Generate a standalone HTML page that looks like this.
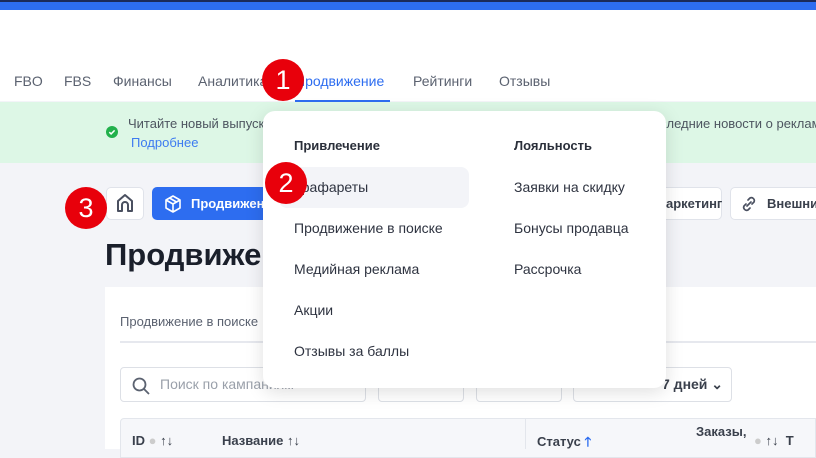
<!DOCTYPE html>
<html><head><meta charset="utf-8"><style>
*{box-sizing:border-box;margin:0;padding:0}
body{width:816px;height:449px;overflow:hidden;background:#f3f4f8;font-family:"Liberation Sans",sans-serif;position:relative;color:#1e2330}
.a{position:absolute}
.top{left:0;top:0;width:816px;height:10px;background:#2d6df0;border-top:2px solid #1b2a5a}
.hdr{left:0;top:10px;width:816px;height:91px;background:#fff}
.nav{top:73px;font-size:14px;color:#5b6270}
.ban{left:0;top:102px;width:816px;height:61px;background:#ddf7e6}
.btn{background:#fff;border:1px solid #e0e3ea;border-radius:5px;height:33px;top:187px}
.card{left:105px;top:287px;width:711px;height:162px;background:#fff}
.inp{border:1px solid #dde0e6;border-radius:4px;height:35px;top:367px;background:#fff}
.dd{left:263px;top:111px;width:403px;height:277px;background:#fff;border-radius:12px;box-shadow:0 4px 18px rgba(0,0,0,.13)}
.it{font-size:14px;color:#2e3340}
.c{width:42px;height:42px;border-radius:50%;background:#e8000b;color:#fff;font-size:27px;text-align:center;line-height:42px}
</style></head><body>
<div class="a top"></div>
<div class="a hdr"></div>
<div class="a nav" style="left:14px">FBO</div>
<div class="a nav" style="left:64px">FBS</div>
<div class="a nav" style="left:113px">Финансы</div>
<div class="a nav" style="left:198px">Аналитика</div>
<div class="a nav" style="left:295px;color:#2d6df0">Продвижение</div>
<div class="a" style="left:295px;top:100px;width:95px;height:2px;background:#2d6df0"></div>
<div class="a nav" style="left:413px">Рейтинги</div>
<div class="a nav" style="left:499px">Отзывы</div>
<div class="a ban"></div>
<svg class="a" style="left:106px;top:126px" width="12" height="12" viewBox="0 0 12 12"><circle cx="6" cy="6" r="6" fill="#22b14c"/><path d="M3.3 6.2l1.8 1.7 3.5-3.5" fill="none" stroke="#fff" stroke-width="1.5"/></svg>
<div class="a" style="left:128px;top:116px;font-size:13px;color:#4d5560">Читайте новый выпуск</div>
<div class="a" style="left:131px;top:135px;font-size:13px;color:#3d7bf0">Подробнее</div>
<div class="a" style="left:660px;top:116px;font-size:13px;color:#4d5560;white-space:nowrap">следние новости о реклам</div>
<div class="a btn" style="left:106px;width:38px"><svg width="36" height="31" viewBox="0 0 36 31"><path d="M11 23V13l7-6 7 6v10h-4v-6a3 3 0 0 0-6 0v6z" fill="none" stroke="#4a5060" stroke-width="2" stroke-linejoin="round"/></svg></div>
<div class="a btn" style="left:152px;width:130px;background:#2d6df0;border-color:#2d6df0;color:#fff;font-weight:bold;font-size:13px;line-height:31px;padding-left:38px">Продвижение
<svg class="a" style="left:10px;top:6px" width="20" height="20" viewBox="0 0 20 20"><path d="M10 2l7 4v8l-7 4-7-4V6z M3 6l7 4 7-4 M10 10v8 M6.5 4l7 4" fill="none" stroke="#fff" stroke-width="1.6" stroke-linejoin="round"/></svg></div>
<div class="a btn" style="left:620px;width:102px;font-size:13px;font-weight:bold;line-height:31px;padding-left:34px;color:#3a404c">Маркетинг</div>
<div class="a btn" style="left:730px;width:100px;font-size:13px;font-weight:bold;line-height:31px;padding-left:36px;color:#3a404c">Внешние
<svg class="a" style="left:8px;top:6px" width="20" height="20" viewBox="0 0 20 20"><path d="M8 12l4-4 M9 6l2-2a3 3 0 0 1 4 4l-2 2 M11 14l-2 2a3 3 0 0 1-4-4l2-2" fill="none" stroke="#4a5060" stroke-width="1.7" stroke-linecap="round"/></svg></div>
<div class="a" style="left:105px;top:237px;font-size:31px;font-weight:bold;color:#1a1f2b">Продвижение</div>
<div class="a card"></div>
<div class="a" style="left:120px;top:314px;font-size:13px;color:#5b6270">Продвижение в поиске</div>
<div class="a" style="left:120px;top:341px;width:696px;height:2px;background:#e6e8ee"></div>
<div class="a inp" style="left:120px;width:246px"><svg class="a" style="left:10px;top:8px" width="20" height="20" viewBox="0 0 20 20"><circle cx="8.5" cy="8.5" r="6" fill="none" stroke="#5b6270" stroke-width="1.8"/><path d="M13 13l5 5" stroke="#5b6270" stroke-width="1.8"/></svg><span class="a" style="left:39px;top:8px;font-size:14px;color:#9aa0aa">Поиск по кампаниям</span></div>
<div class="a inp" style="left:378px;width:86px"></div>
<div class="a inp" style="left:476px;width:86px"></div>
<div class="a inp" style="left:573px;width:159px"><span class="a" style="left:88px;top:8px;font-size:14px;font-weight:bold;color:#3a404c">7 дней ⌄</span></div>
<div class="a" style="left:120px;top:418px;width:696px;height:40px;background:#f6f7fa;border:1px solid #e3e6ec;border-radius:4px 0 0 0"></div>
<div class="a" style="left:525px;top:418px;width:1px;height:31px;background:#e3e6ec"></div>
<div class="a" style="left:132px;top:433px;font-size:13px;font-weight:bold;color:#3a404c">ID <span style="color:#ccc">●</span> ↑↓</div>
<div class="a" style="left:222px;top:433px;font-size:13px;font-weight:bold;color:#3a404c">Название ↑↓</div>
<div class="a" style="left:537px;top:433px;font-size:13px;font-weight:bold;color:#3a404c">Статус <span style="color:#2d6df0">🡑</span></div>
<div class="a" style="left:696px;top:424px;font-size:13px;font-weight:bold;color:#3a404c">Заказы,</div>
<div class="a" style="left:754px;top:433px;font-size:13px;font-weight:bold;color:#3a404c"><span style="color:#ccc">●</span> ↑↓ &nbsp;Т</div>
<div class="a dd">
<div class="a" style="left:31px;top:27px;font-size:13px;font-weight:bold;color:#2a2f3a">Привлечение</div>
<div class="a" style="left:251px;top:27px;font-size:13px;font-weight:bold;color:#2a2f3a">Лояльность</div>
<div class="a" style="left:16px;top:56px;width:190px;height:41px;border-radius:8px;background:#f3f4f8"></div>
<div class="a it" style="left:31px;top:68px">Трафареты</div>
<div class="a it" style="left:31px;top:109px">Продвижение в поиске</div>
<div class="a it" style="left:31px;top:150px">Медийная реклама</div>
<div class="a it" style="left:31px;top:191px">Акции</div>
<div class="a it" style="left:31px;top:232px">Отзывы за баллы</div>
<div class="a it" style="left:251px;top:68px">Заявки на скидку</div>
<div class="a it" style="left:251px;top:109px">Бонусы продавца</div>
<div class="a it" style="left:251px;top:150px">Рассрочка</div>
</div>
<div class="a c" style="left:262px;top:59px">1</div>
<div class="a c" style="left:265px;top:162px">2</div>
<div class="a c" style="left:65px;top:187px">3</div>
</body></html>
